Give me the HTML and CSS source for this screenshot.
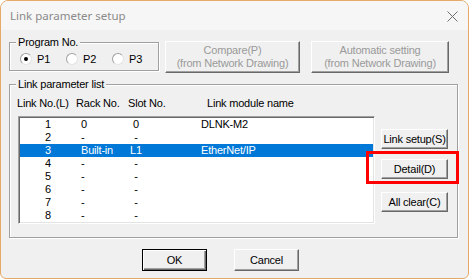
FILE: index.html
```html
<!DOCTYPE html>
<html lang="en">
<head>
    <meta charset="UTF-8">
    <title>Link parameter setup</title>
    <link rel="stylesheet" href="styles.css">
</head>
<body>

    <div class="window">
        <!-- Title bar -->
        <div class="titlebar">
            <span class="title">Link parameter setup</span>
            <svg class="close" width="11" height="11" viewBox="0 0 11 11">
                <path d="M0.5 0.5 L10.5 10.5 M10.5 0.5 L0.5 10.5" stroke="#6f6f6f" stroke-width="1" fill="none"/>
            </svg>
        </div>

        <div class="client">
            <!-- Program selection + disabled buttons -->
            <div class="top-row">
                <fieldset class="group program">
                    <legend>Program No.</legend>
                    <div class="radios">
                        <label class="radio"><span class="circle checked"></span>P1</label>
                        <label class="radio"><span class="circle"></span>P2</label>
                        <label class="radio"><span class="circle"></span>P3</label>
                    </div>
                </fieldset>
                <button class="btn compare" disabled>Compare(P)<br>(from Network Drawing)</button>
                <button class="btn auto" disabled>Automatic setting<br>(from Network Drawing)</button>
            </div>

            <!-- Link parameter list -->
            <fieldset class="group list-group">
                <legend>Link parameter list</legend>
                <div class="list-head">
                    <span class="h-no">Link No.(L)</span>
                    <span class="h-rack">Rack No.</span>
                    <span class="h-slot">Slot No.</span>
                    <span class="h-name">Link module name</span>
                </div>
                <div class="list-body">
                    <div class="listbox">
                        <div class="row"><span class="c-no">1</span><span>0</span><span class="c-slot">0</span><span class="c-name">DLNK-M2</span></div>
                        <div class="row"><span class="c-no">2</span><span>-</span><span class="c-slot">-</span><span class="c-name"></span></div>
                        <div class="row selected"><span class="c-no">3</span><span>Built-in</span><span class="c-slot">L1</span><span class="c-name">EtherNet/IP</span></div>
                        <div class="row"><span class="c-no">4</span><span>-</span><span class="c-slot">-</span><span class="c-name"></span></div>
                        <div class="row"><span class="c-no">5</span><span>-</span><span class="c-slot">-</span><span class="c-name"></span></div>
                        <div class="row"><span class="c-no">6</span><span>-</span><span class="c-slot">-</span><span class="c-name"></span></div>
                        <div class="row"><span class="c-no">7</span><span>-</span><span class="c-slot">-</span><span class="c-name"></span></div>
                        <div class="row"><span class="c-no">8</span><span>-</span><span class="c-slot">-</span><span class="c-name"></span></div>
                    </div>
                    <div class="side-buttons">
                        <button class="btn side">Link setup(S)</button>
                        <div class="detail-wrap">
                            <button class="btn side">Detail(D)</button>
                            <div class="highlight"></div>
                        </div>
                        <button class="btn side clear">All clear(C)</button>
                    </div>
                </div>
            </fieldset>

            <!-- Dialog buttons -->
            <div class="footer">
                <button class="btn footer-btn default">OK</button>
                <button class="btn footer-btn">Cancel</button>
            </div>
        </div>
    </div>

</body>
</html>
```

FILE: styles.css
```css
/* Global Styles */
* {
    margin: 0;
    padding: 0;
    box-sizing: border-box;
}

body {
    font-family: 'Liberation Sans', Arial, sans-serif;
    font-size: 11px;
    letter-spacing: -0.2px;
    color: #000;
    background: #ffffff;
}

/* Window frame */
.window {
    width: 469px;
    height: 279px;
    border: 1px solid #e5a96a;
    border-radius: 8px 8px 6px 6px;
    background: #f0f0f0;
    overflow: hidden;
}

.titlebar {
    height: 29px;
    display: flex;
    align-items: center;
    justify-content: space-between;
    padding: 0 10px 0 9px;
    background: #f6f6f6;
}

.title {
    font-family: 'Noto Sans', sans-serif;
    font-size: 11.5px;
    letter-spacing: 0;
    color: #8a8a8a;
}

.close {
    margin-top: 1px;
}

.client {
    padding: 6px 10px 0 8px;
}

/* Group boxes (etched frame) */
.group {
    border: 1px solid #a0a0a0;
    box-shadow: inset 1px 1px #fff, 1px 1px #fff;
}

.group legend {
    margin-left: 6px;
    padding: 0 2px;
    line-height: 13px;
    background: #f0f0f0;
    position: relative;
}

/* Top row */
.top-row {
    display: flex;
    align-items: flex-start;
    height: 37px;
}

.program {
    width: 149px;
    height: 35px;
}

.radios {
    display: flex;
    align-items: center;
    height: 13px;
    margin-top: 3px;
    padding-left: 10px;
}

.radio {
    width: 46px;
    display: flex;
    align-items: center;
    gap: 5px;
}

.circle {
    width: 12px;
    height: 12px;
    border-radius: 50%;
    background: #fff;
    border: 1px solid;
    border-color: #a0a0a0 #e3e3e3 #e3e3e3 #a0a0a0;
    display: flex;
    align-items: center;
    justify-content: center;
}

.circle.checked::after {
    content: '';
    width: 4px;
    height: 4px;
    border-radius: 50%;
    background: #000;
}

/* Classic buttons */
.btn {
    font-family: 'Liberation Sans', Arial, sans-serif;
    font-size: 11px;
    letter-spacing: -0.2px;
    line-height: 13px;
    color: #000;
    background: #f0f0f0;
    border: 1px solid;
    border-color: #fff #696969 #696969 #fff;
    box-shadow: inset -1px -1px #a0a0a0;
}

.btn:disabled {
    color: #9a9a9a;
}

.compare {
    width: 135px;
    height: 32px;
    margin: 5px 0 0 6px;
}

.auto {
    width: 138px;
    height: 32px;
    margin: 5px 0 0 11px;
}

/* List group */
.list-group {
    margin-top: 5px;
    width: 449px;
    height: 160px;
}

.list-head {
    display: flex;
    height: 13px;
    line-height: 13px;
    margin-top: 6px;
    padding-left: 7px;
}

.h-no { width: 59px; }
.h-rack { width: 52px; }
.h-slot { width: 79px; }

.list-body {
    display: flex;
    margin-top: 6px;
}

.listbox {
    width: 357px;
    height: 108px;
    margin-left: 8px;
    background: #fff;
    border: 1px solid;
    border-color: #a0a0a0 #fff #fff #a0a0a0;
    box-shadow: inset 1px 1px #696969, inset -1px -1px #e3e3e3;
    padding: 1px;
}

.row {
    display: grid;
    grid-template-columns: 61px 37px 36px 1fr;
    height: 13px;
    line-height: 13px;
}

.row.selected {
    background: #0078d7;
    color: #fff;
}

.c-no { padding-left: 25px; }
.c-slot { text-align: center; }
.c-name { padding-left: 47px; }

/* Side buttons */
.side-buttons {
    display: flex;
    flex-direction: column;
    margin-left: 6px;
    padding-top: 13px;
}

.side {
    width: 67px;
    height: 20px;
}

.detail-wrap {
    position: relative;
    margin-top: 10px;
}

.detail-wrap .side {
    display: block;
}

.highlight {
    position: absolute;
    left: -15px;
    top: -8px;
    width: 93px;
    height: 33px;
    border: 3px solid #ff0000;
}

.clear {
    margin-top: 13px;
}

/* Footer */
.footer {
    display: flex;
    gap: 27px;
    margin-top: 11px;
    padding-left: 133px;
}

.footer-btn {
    width: 65px;
    height: 22px;
}

.footer-btn.default {
    border: 1px solid #000;
    box-shadow: inset 1px 1px #fff, inset -1px -1px #696969, inset -2px -2px #a0a0a0;
}
```
